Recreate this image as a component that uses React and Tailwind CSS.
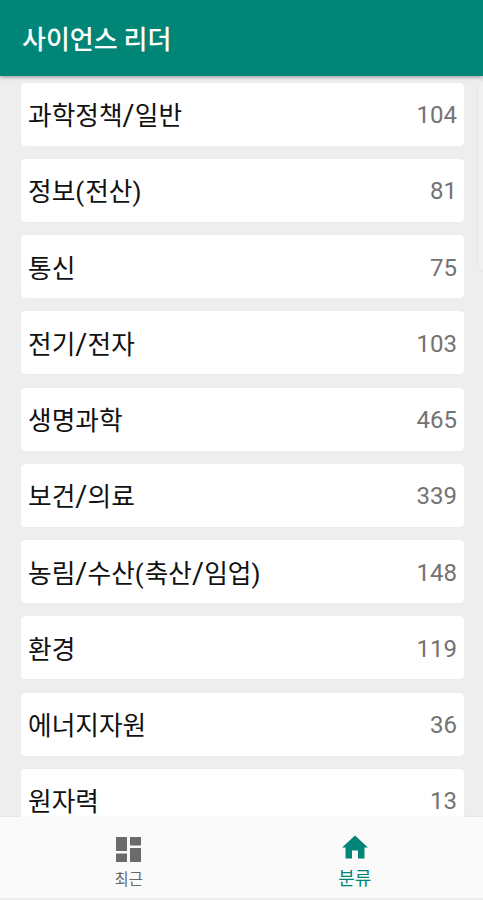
const categories = [
  ['과학정책/일반', 104],
  ['정보(전산)', 81],
  ['통신', 75],
  ['전기/전자', 103],
  ['생명과학', 465],
  ['보건/의료', 339],
  ['농림/수산(축산/임업)', 148],
  ['환경', 119],
  ['에너지자원', 36],
  ['원자력', 13],
];

// Latin punctuation is set in Roboto, a little wider than the Hangul around it.
function CategoryName({ name }) {
  return (
    <span className="text-[25.7px] leading-none whitespace-nowrap text-[#111111]">
      {name.split(/([/()])/).map((part, i) => {
        if (part === '/') {
          return <span key={i} className="font-['Roboto',sans-serif] text-[29px] leading-[0] tracking-[0.3px]">/</span>;
        }
        if (part === '(' || part === ')') {
          return <span key={i} className="font-['Roboto',sans-serif] text-[26px] leading-[0] tracking-[1px]">{part}</span>;
        }
        return part;
      })}
    </span>
  );
}

function CategoryCard({ name, count }) {
  return (
    <li className="flex h-[63px] shrink-0 items-center justify-between rounded-[4px] bg-white pr-[7px] pl-[7px] shadow-[0_0_1px_rgba(0,0,0,0.08)]">
      <CategoryName name={name} />
      <span className="pt-[2px] font-['Roboto','Noto_Sans_CJK_KR',sans-serif] text-[24px] leading-none text-[#737373]">{count}</span>
    </li>
  );
}

function DashboardIcon() {
  return (
    <svg className="h-[25px] w-[25px]" viewBox="0 0 25 25" fill="#6b6b6b">
      <path d="M0 0h11v14H0zM0 16.5h11V25H0zM14 0h11v8.5H14zM14 11h11v14H14z" />
    </svg>
  );
}

function HomeIcon() {
  return (
    <svg className="h-[24px] w-[26px]" viewBox="0 0 26 24" fill="#008577">
      <path d="M13 0.5L0 12.5h3.5V23.5H10V15.5h6v8h6.5v-11H26z" />
    </svg>
  );
}

export default function App() {
  return (
    <div className="relative flex h-[900px] w-[483px] flex-col overflow-hidden bg-[#eeeeee] font-['Noto_Sans_CJK_KR',sans-serif]">
      <header className="z-10 flex h-[76px] shrink-0 items-center bg-[#008577] pl-[22px] shadow-[0_1px_4px_rgba(0,0,0,0.4)]">
        <h1 className="text-[26px] leading-none font-medium text-white">사이언스 리더</h1>
      </header>
      <main className="min-h-0 flex-1 overflow-hidden pt-[6.5px] pr-[19px] pl-[21px]">
        <ul className="flex flex-col gap-[13.25px]">
          {categories.map(([name, count]) => (
            <CategoryCard key={name} name={name} count={count} />
          ))}
        </ul>
      </main>
      <div className="absolute top-[80px] left-[477px] h-[192px] w-[16px] rounded-[8px] border border-[#e4e4e4] bg-[#f1f1f1]" />
      <nav className="z-10 grid h-[83px] shrink-0 grid-cols-2 border-b-2 border-[#eeeeee] bg-[#fafafa] shadow-[0_0_2px_rgba(0,0,0,0.08)]">
        <button className="flex flex-col items-center pt-[20px] pl-[16px] text-[#6b6b6b]">
          <DashboardIcon />
          <span className="mt-[9px] text-[15.4px] leading-none">최근</span>
        </button>
        <button className="flex flex-col items-center pt-[18px] pr-[15px] text-[#008577]">
          <HomeIcon />
          <span className="mt-[9px] text-[18px] leading-none">분류</span>
        </button>
      </nav>
    </div>
  );
}
